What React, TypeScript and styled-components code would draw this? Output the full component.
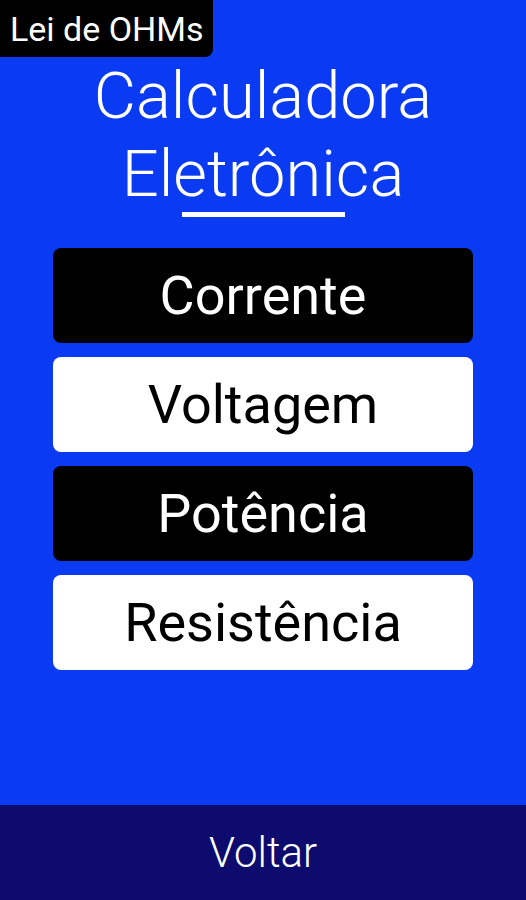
import React from "react";
import styled, { createGlobalStyle } from "styled-components";

const GlobalStyle = createGlobalStyle`
  html, body {
    margin: 0;
    padding: 0;
    background: #0a3af2;
  }
  * {
    box-sizing: border-box;
  }
`;

const Screen = styled.div`
  display: flex;
  flex-direction: column;
  width: 100%;
  height: 900px;
  background: #0a3af2;
  font-family: Roboto, "Liberation Sans", sans-serif;
  color: #fff;
`;

const Main = styled.main`
  flex: 1;
  display: flex;
  flex-direction: column;
  align-items: center;
`;

const Badge = styled.div`
  align-self: flex-start;
  height: 57px;
  padding: 0 9px 0 10px;
  display: flex;
  align-items: center;
  background: #000;
  border-bottom-right-radius: 8px;
  font-size: 34px;
  line-height: 1;
`;

const Title = styled.h1`
  margin: 0;
  font-size: 65px;
  font-weight: 300;
  line-height: 78px;
  text-align: center;
`;

const Underline = styled.div`
  width: 163px;
  height: 5px;
  background: #fff;
  margin-top: -1px;
`;

const ButtonList = styled.div`
  display: flex;
  flex-direction: column;
  gap: 14px;
  width: 420px;
  margin-top: 31px;
`;

const ChoiceButton = styled.button<{ $dark?: boolean }>`
  height: 95px;
  border: none;
  border-radius: 8px;
  background: ${({ $dark }) => ($dark ? "#000" : "#fff")};
  color: ${({ $dark }) => ($dark ? "#fff" : "#000")};
  font-family: Roboto, "Liberation Sans", sans-serif;
  font-size: 54px;
  cursor: pointer;
`;

const Footer = styled.footer`
  height: 95px;
  display: flex;
  align-items: center;
  justify-content: center;
  background: #0d0b6e;
  font-size: 42px;
  font-weight: 300;
`;

const options = [
  { label: "Corrente", dark: true },
  { label: "Voltagem", dark: false },
  { label: "Potência", dark: true },
  { label: "Resistência", dark: false },
];

export default function App() {
  return (
    <>
      <GlobalStyle />
      <Screen>
        <Main>
          <Badge>Lei de OHMs</Badge>
          <Title>
            Calculadora
            <br />
            Eletrônica
          </Title>
          <Underline />
          <ButtonList>
            {options.map((o) => (
              <ChoiceButton key={o.label} $dark={o.dark}>
                {o.label}
              </ChoiceButton>
            ))}
          </ButtonList>
        </Main>
        <Footer>Voltar</Footer>
      </Screen>
    </>
  );
}
